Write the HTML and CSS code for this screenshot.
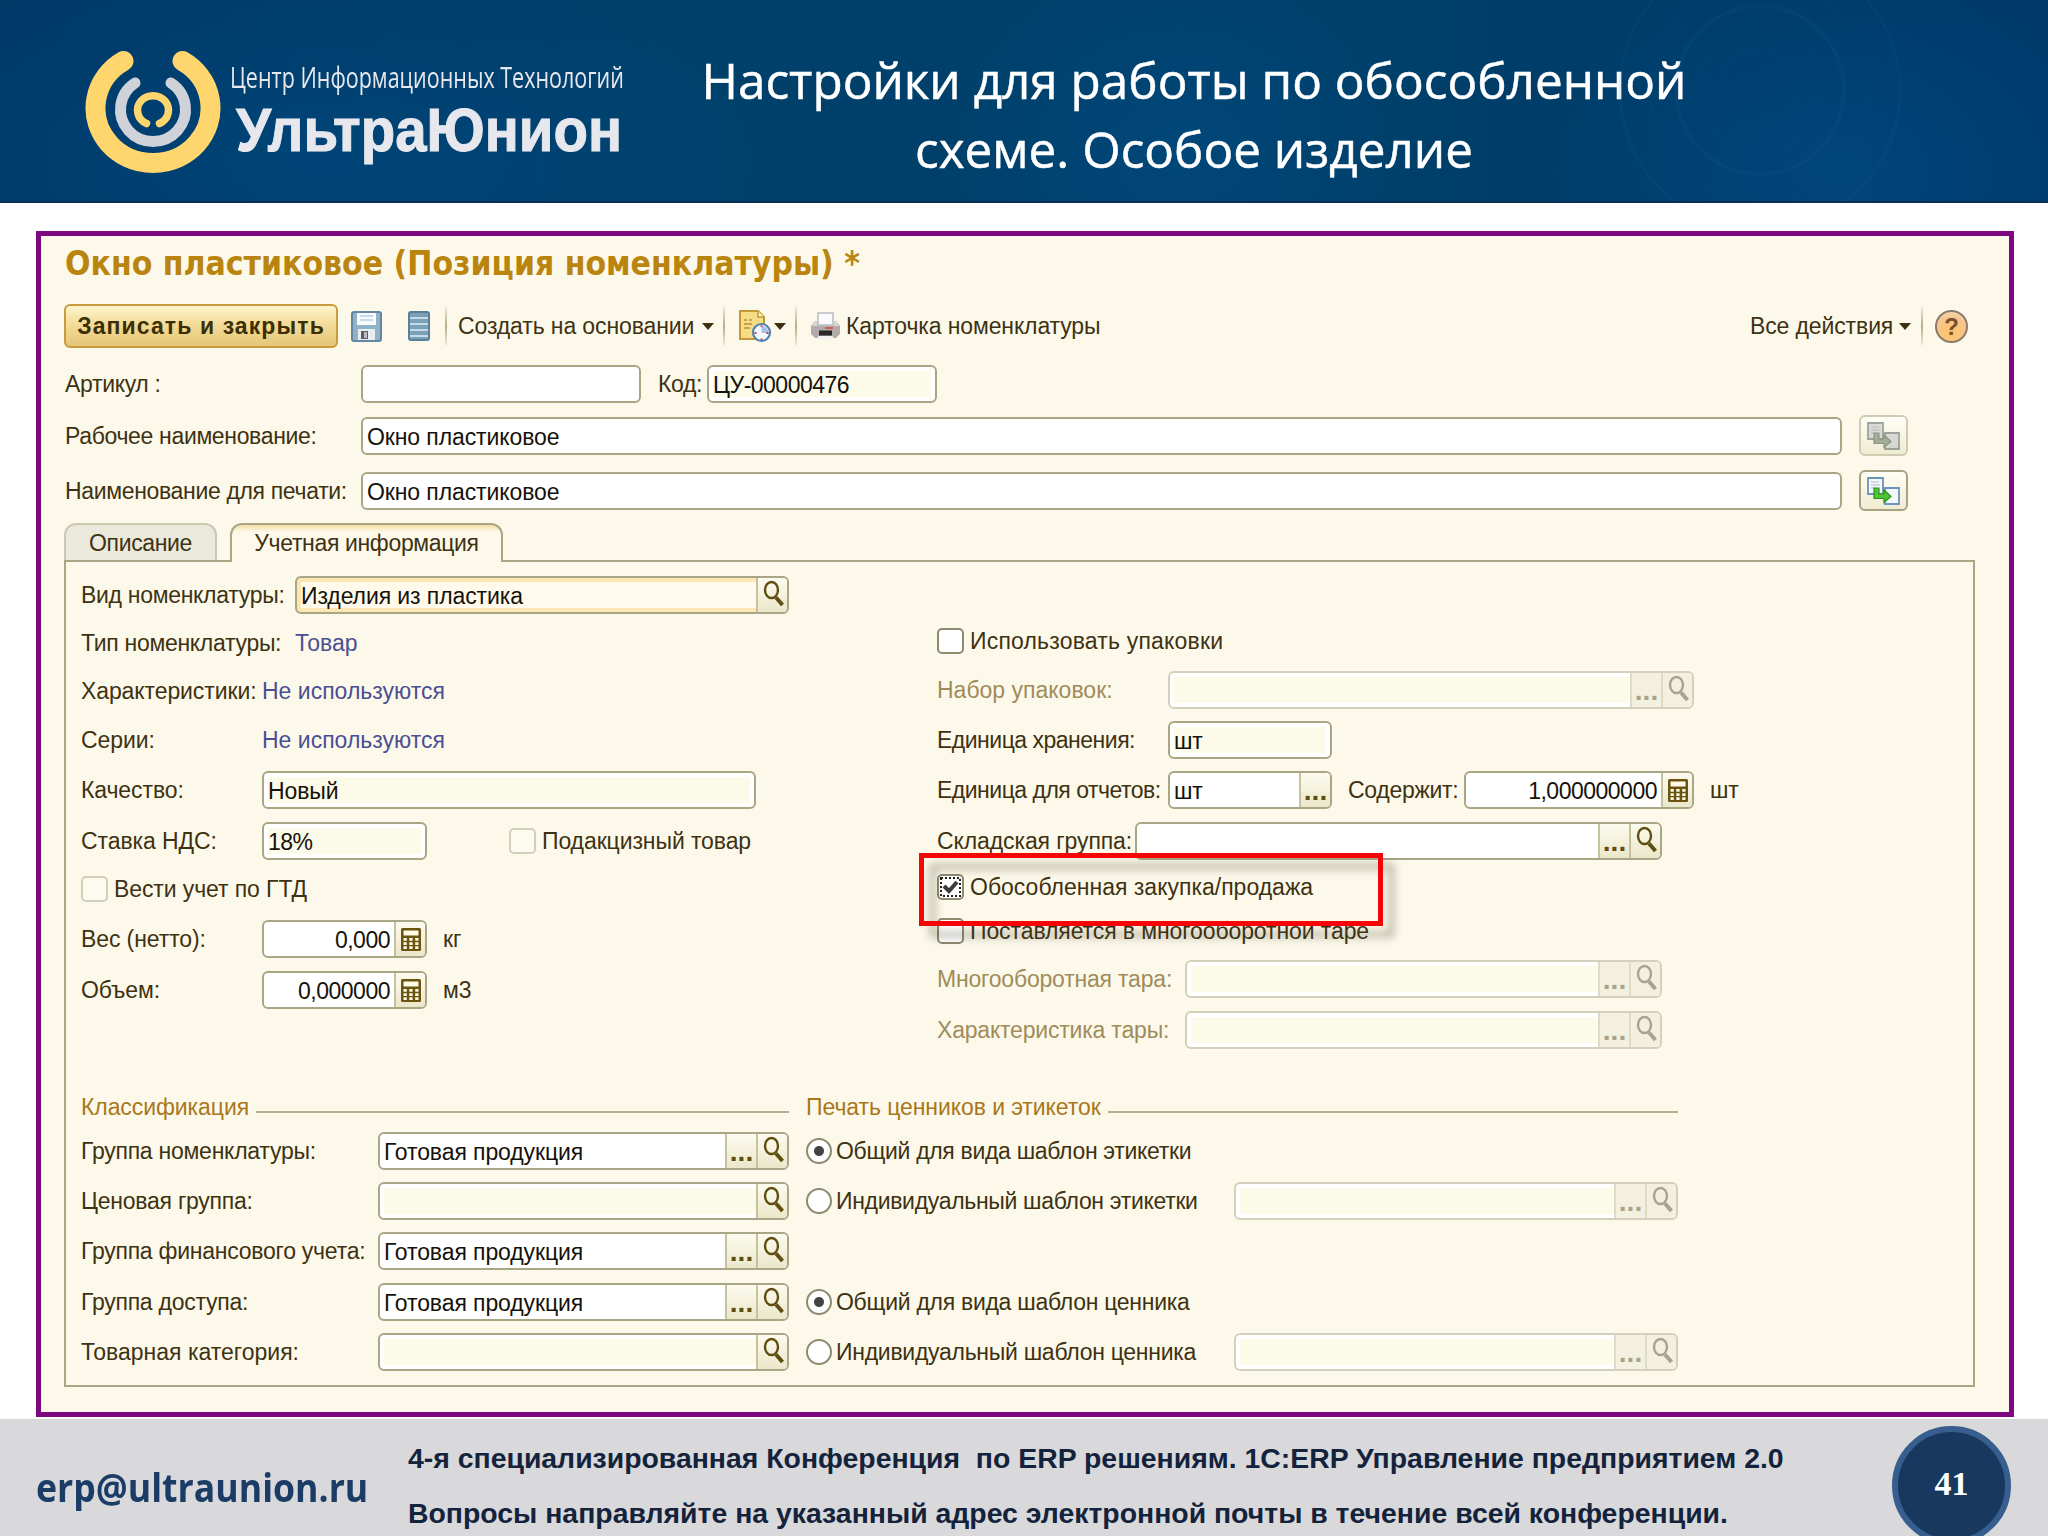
FILE: index.html
```html
<!DOCTYPE html>
<html lang="ru">

<head>
    <meta charset="UTF-8">
    <title>Настройки для работы по обособленной схеме</title>
    <link rel="stylesheet" href="styles.css">
</head>

<body>

    <svg class="sprite" width="0" height="0">
        <symbol id="i-search" viewBox="0 0 22 30">
            <ellipse cx="9.5" cy="10" rx="6.5" ry="8" fill="none" stroke="currentColor" stroke-width="2.4" />
            <path d="M14 17.500l6.500 7.500" stroke="currentColor" stroke-width="4" />
        </symbol>
        <symbol id="i-calc" viewBox="0 0 20 23">
            <rect width="20" height="23" rx="1.500" fill="#6b5410" />
            <path fill="#fffbe6" d="M2.500 2.500h15v5h-15zM2.500 10h3.300v2.700H2.500zM8.300 10h3.300v2.700H8.300zM14.200 10h3.300v2.700h-3.300zM2.500 14.200h3.300v2.700H2.500zM8.300 14.200h3.300v2.700H8.300zM14.200 14.200h3.300v2.700h-3.300zM2.500 18.300h3.300V21H2.500zM8.300 18.300h3.300V21H8.300zM14.200 18.300h3.300V21h-3.300z" />
        </symbol>
        <symbol id="i-copy" viewBox="0 0 33 28">
            <path class="doc" d="M1 1h15v16H1z" stroke-width="1.800" />
            <path class="lines" d="M4 5h8M4 8h9M4 11h5" stroke-width="1.200" />
            <path class="doc" d="M18 11h14v16H18z" stroke-width="1.800" />
            <path class="arrow" d="M7 11h5v6h5v-4l7 6.500-7 6v-4H7z" stroke-width="1.200" />
        </symbol>
    </svg>

    <header class="header">
        <svg class="logo" viewBox="0 0 140 126" width="140" height="126" fill="none" stroke-linecap="round">
            <path d="M39.500 13A57.500 54.900 0 1 0 98.500 13" stroke="#ffd56e" stroke-width="20" />
            <path d="M51 35A32.500 31.900 0 1 0 87 35" stroke="#cfd2d9" stroke-width="11" />
            <path d="M62.500 75.500A15.500 14.600 0 1 1 75.500 75.500" stroke="#ffd56e" stroke-width="7.500" />
        </svg>
        <div class="brand">
            <div class="brand-top"><span>Центр Информационных Технологий</span></div>
            <div class="brand-name"><span>УльтраЮнион</span></div>
        </div>
        <h1 class="slide-title"><span>Настройки для работы по обособленной<br>схеме. Особое изделие</span></h1>
        <svg class="rings" viewBox="0 0 360 201" width="360" height="201" fill="none" stroke="#2a6a9c">
            <circle cx="180" cy="90" r="40" /><circle cx="180" cy="90" r="62" /><circle cx="180" cy="90" r="84" stroke-width="4" />
            <circle cx="180" cy="90" r="110" /><circle cx="180" cy="90" r="140" stroke-width="3" />
        </svg>
    </header>

    <main class="window">
        <h2 class="win-title">Окно пластиковое (Позиция номенклатуры) *</h2>

        <div class="toolbar">
            <button class="save-btn">Записать и закрыть</button>
            <svg class="t-floppy" viewBox="0 0 31 31" width="31" height="31">
                <rect x="1" y="1" width="29" height="29" rx="2" fill="#8fb2c9" stroke="#6486a0" stroke-width="2" />
                <rect x="6" y="2" width="19" height="12" fill="#f6fafc" />
                <path d="M9 5h13M9 9h13" stroke="#b8cedb" stroke-width="1.500" />
                <rect x="7" y="18" width="17" height="11" fill="#e9edf0" />
                <rect x="10" y="20" width="7" height="8" fill="#5b5f66" />
                <rect x="13" y="21" width="3" height="6" fill="#b9bcc1" />
            </svg>
            <svg class="t-list" viewBox="0 0 22 30" width="22" height="30">
                <rect x="1" y="1" width="20" height="28" rx="2" fill="#7ba1ba" stroke="#5b7f97" stroke-width="2" />
                <path d="M2 7h18M2 13h18M2 19h18M2 25h18" stroke="#c6dbe7" stroke-width="2" />
            </svg>
            <i class="sep"></i>
            <span class="t-create">Создать на основании</span>
            <i class="caret"></i>
            <i class="sep sep-2"></i>
            <svg class="t-doc" viewBox="0 0 34 34" width="34" height="34">
                <path d="M2 2h18l6 6v22H2z" fill="#f5dc85" stroke="#c39a35" stroke-width="2" />
                <path d="M20 2v6h6" fill="#fff3c4" stroke="#c39a35" stroke-width="1.500" />
                <path d="M6 11h3M11 11h3M6 15h8M6 19h6" stroke="#c9a548" stroke-width="1.800" />
                <circle cx="23.500" cy="23.500" r="8.500" fill="#f3f8fd" stroke="#5182b4" stroke-width="2.200" />
                <path d="M23.500 24v-7a7 7 0 0 1 7 7z" fill="#a9bfea" />
                <path d="M23.500 18v-1.500M23.500 31V29.500M16.500 24h2M28.500 24h2" stroke="#d2404a" stroke-width="2" />
            </svg>
            <i class="caret caret-2"></i>
            <i class="sep sep-3"></i>
            <svg class="t-print" viewBox="0 0 29 28" width="29" height="28">
                <path d="M4 9h21l4 5v8l-4 4H4l-4-4v-8z" fill="#b3abab" />
                <path d="M4 9h21l3 5H1z" fill="#d9d6d6" />
                <path d="M7 1h15v12H7z" fill="#fbfbfd" stroke="#b9bbc4" stroke-width="1.500" />
                <path d="M14 16h8" stroke="#d65a55" stroke-width="2" />
                <rect x="8" y="18.500" width="13" height="5" fill="#2b2727" />
                <rect x="7" y="24" width="15" height="3.500" fill="#f3f1f1" />
            </svg>
            <span class="t-card">Карточка номенклатуры</span>
            <span class="t-all">Все действия</span>
            <i class="caret"></i>
            <i class="sep sep-4"></i>
            <span class="help">?</span>
        </div>

        <div class="head-row row-article">
            <label class="w-head">Артикул :</label>
            <div class="field w280"></div>
            <label class="lbl-code">Код:</label>
            <div class="field ro w230"><span class="val tight">ЦУ-00000476</span></div>
        </div>
        <div class="head-row row-work">
            <label class="w-head">Рабочее наименование:</label>
            <div class="field w1481"><span class="val">Окно пластиковое</span></div>
            <button class="copy-btn off"><svg width="33" height="28"><use href="#i-copy" /></svg></button>
        </div>
        <div class="head-row row-print">
            <label class="w-head">Наименование для печати:</label>
            <div class="field w1481"><span class="val">Окно пластиковое</span></div>
            <button class="copy-btn"><svg width="33" height="28"><use href="#i-copy" /></svg></button>
        </div>

        <div class="tabs">
            <div class="tab">Описание</div>
            <div class="tab active">Учетная информация</div>
        </div>

        <section class="panel">
            <div class="columns">
                <div class="left">
                    <div class="row">
                        <label class="w-kind">Вид номенклатуры:</label>
                        <div class="field focus w493"><span class="val">Изделия из пластика</span><b class="fb"><svg width="22" height="30"><use href="#i-search" /></svg></b></div>
                    </div>
                    <div class="row"><label class="w-kind">Тип номенклатуры:</label><a class="link">Товар</a></div>
                    <div class="row"><label class="w-left">Характеристики:</label><a class="link">Не используются</a></div>
                    <div class="row"><label class="w-left">Серии:</label><a class="link">Не используются</a></div>
                    <div class="row"><label class="w-left">Качество:</label><div class="field ro w494"><span class="val">Новый</span></div></div>
                    <div class="row">
                        <label class="w-left">Ставка НДС:</label>
                        <div class="field ro w165"><span class="val tight">18%</span></div>
                        <i class="check off excise"></i><label>Подакцизный товар</label>
                    </div>
                    <div class="row"><i class="check off"></i><label class="gtd">Вести учет по ГТД</label></div>
                    <div class="row">
                        <label class="w-left">Вес (нетто):</label>
                        <div class="field num w165"><span class="val tight">0,000</span><b class="fb"><svg width="20" height="23"><use href="#i-calc" /></svg></b></div>
                        <label class="unit">кг</label>
                    </div>
                    <div class="row">
                        <label class="w-left">Объем:</label>
                        <div class="field num w165"><span class="val tight">0,000000</span><b class="fb"><svg width="20" height="23"><use href="#i-calc" /></svg></b></div>
                        <label class="unit">м3</label>
                    </div>
                </div>

                <div class="right">
                    <div class="row"><i class="check"></i><label class="wide">Использовать упаковки</label></div>
                    <div class="row dim">
                        <label class="w-right loose">Набор упаковок:</label>
                        <div class="field ro w525"><span class="val"></span><b class="fb dots">...</b><b class="fb"><svg width="22" height="30"><use href="#i-search" /></svg></b></div>
                    </div>
                    <div class="row"><label class="w-right">Единица хранения:</label><div class="field ro w163"><span class="val">шт</span></div></div>
                    <div class="row">
                        <label class="w-right">Единица для отчетов:</label>
                        <div class="field w163"><span class="val">шт</span><b class="fb dots">...</b></div>
                        <label class="holds">Содержит:</label>
                        <div class="field num w229"><span class="val tight">1,000000000</span><b class="fb"><svg width="20" height="23"><use href="#i-calc" /></svg></b></div>
                        <label class="unit">шт</label>
                    </div>
                    <div class="row">
                        <label class="w-store">Складская группа:</label>
                        <div class="field w526"><span class="val"></span><b class="fb dots">...</b><b class="fb"><svg width="22" height="30"><use href="#i-search" /></svg></b></div>
                    </div>
                    <div class="row">
                        <i class="check on"><svg width="21" height="20" viewBox="0 0 21 20"><rect x="1" y="1" width="19" height="18" fill="none" stroke="#222" stroke-width="2" stroke-dasharray="2 2" /><path d="M4 9l5 5 8-9" fill="none" stroke="#3c3c3c" stroke-width="4" /></svg></i>
                        <label class="loose">Обособленная закупка/продажа</label>
                    </div>
                    <div class="row"><i class="check"></i><label>Поставляется в многооборотной таре</label></div>
                    <div class="row dim">
                        <label class="w-tare">Многооборотная тара:</label>
                        <div class="field ro w476"><span class="val"></span><b class="fb dots">...</b><b class="fb"><svg width="22" height="30"><use href="#i-search" /></svg></b></div>
                    </div>
                    <div class="row dim">
                        <label class="w-tare">Характеристика тары:</label>
                        <div class="field ro w476"><span class="val"></span><b class="fb dots">...</b><b class="fb"><svg width="22" height="30"><use href="#i-search" /></svg></b></div>
                    </div>
                    <!-- рамка вокруг флажка -->
                    <div class="highlight"></div>
                </div>
            </div>

            <div class="groups">
                <div class="group g-class">
                    <h3><span>Классификация</span></h3>
                    <div class="row"><label class="w-group">Группа номенклатуры:</label><div class="field w411"><span class="val">Готовая продукция</span><b class="fb dots">...</b><b class="fb"><svg width="22" height="30"><use href="#i-search" /></svg></b></div></div>
                    <div class="row"><label class="w-group">Ценовая группа:</label><div class="field ro w411"><span class="val"></span><b class="fb"><svg width="22" height="30"><use href="#i-search" /></svg></b></div></div>
                    <div class="row"><label class="w-group">Группа финансового учета:</label><div class="field w411"><span class="val">Готовая продукция</span><b class="fb dots">...</b><b class="fb"><svg width="22" height="30"><use href="#i-search" /></svg></b></div></div>
                    <div class="row"><label class="w-group">Группа доступа:</label><div class="field w411"><span class="val">Готовая продукция</span><b class="fb dots">...</b><b class="fb"><svg width="22" height="30"><use href="#i-search" /></svg></b></div></div>
                    <div class="row"><label class="w-group loose">Товарная категория:</label><div class="field ro w411"><span class="val"></span><b class="fb"><svg width="22" height="30"><use href="#i-search" /></svg></b></div></div>
                </div>
                <div class="group g-print">
                    <h3><span>Печать ценников и этикеток</span></h3>
                    <div class="row"><i class="radio on"></i><label>Общий для вида шаблон этикетки</label></div>
                    <div class="row"><i class="radio"></i><label class="w-tpl">Индивидуальный шаблон этикетки</label><div class="field ro dim w444"><span class="val"></span><b class="fb dots">...</b><b class="fb"><svg width="22" height="30"><use href="#i-search" /></svg></b></div></div>
                    <div class="row"></div>
                    <div class="row"><i class="radio on"></i><label class="snug">Общий для вида шаблон ценника</label></div>
                    <div class="row"><i class="radio"></i><label class="w-tpl snug">Индивидуальный шаблон ценника</label><div class="field ro dim w444"><span class="val"></span><b class="fb dots">...</b><b class="fb"><svg width="22" height="30"><use href="#i-search" /></svg></b></div></div>
                </div>
            </div>
        </section>
    </main>

    <footer class="footer">
        <div class="email"><span>erp@ultraunion.ru</span></div>
        <div class="notes">
            <p>4-я специализированная Конференция&nbsp; по ERP решениям. 1С:ERP Управление предприятием 2.0</p>
            <p>Вопросы направляйте на указанный адрес электронной почты в течение всей конференции.</p>
        </div>
        <div class="page-no">41</div>
    </footer>

</body>

</html>
```
FILE: styles.css
```css
* {
    box-sizing: border-box;
}

body {
    margin: 0;
    width: 2048px;
    height: 1536px;
    overflow: hidden;
    background: #fff;
    font-family: "Liberation Sans", Arial, sans-serif;
    font-size: 23px;
    color: #3d3212;
    display: flex;
    flex-direction: column;
}

h1, h2, h3, p {
    margin: 0;
    font-weight: normal;
}

.sprite {
    position: absolute;
}

svg {
    display: block;
    flex: none;
}

/* шапка */
.header {
    position: relative;
    display: flex;
    height: 203px;
    flex: none;
    background:
        radial-gradient(ellipse 260px 220px at 1180px 150px, rgba(0, 78, 136, .5), transparent),
        radial-gradient(ellipse 300px 200px at 1840px 170px, rgba(0, 80, 140, .5), transparent),
        radial-gradient(ellipse 500px 220px at 330px 160px, rgba(0, 72, 126, .7), transparent),
        linear-gradient(90deg, #003866, #00406a 35%, #003f69 70%, #00396a);
    border-bottom: 2px solid #0a2f55;
    overflow: hidden;
}

.logo {
    margin: 48px 0 0 84px;
}

.brand {
    width: 400px;
    margin-left: 6px;
    padding-top: 55px;
    color: #e6e8ee;
    white-space: nowrap;
}

.brand span,
.email span {
    display: inline-block;
    transform-origin: 0 50%;
}

.brand-top {
    font: 30px/44px "Open Sans", sans-serif;
}

.brand-top span {
    transform: scaleX(.717);
}

.brand-name {
    font: bold 62px/62px "Liberation Sans", sans-serif;
    padding-left: 6px;
    -webkit-text-stroke: 1px #e6e8ee;
}

.brand-name span {
    transform: scaleX(.91);
}

.slide-title {
    position: absolute;
    left: 594px;
    width: 1200px;
    top: 46px;
    color: #fff;
    text-align: center;
    font: 50px/69px "Open Sans", sans-serif;
    -webkit-text-stroke: .5px #fff;
}

.slide-title span {
    display: inline-block;
    transform: scaleX(.989);
}

.rings {
    position: absolute;
    left: 1580px;
    top: 0;
    opacity: .1;
}

/* окно */
.window {
    width: 1978px;
    height: 1186px;
    flex: none;
    margin: 28px 0 0 36px;
    padding-left: 24px;
    border: 5px solid #7d087f;
    background: #fdf9ea;
    white-space: nowrap;
}

.win-title {
    height: 68px;
    padding-top: 9px;
    font: bold 33.4px/38px "DejaVu Sans Condensed", "DejaVu Sans", sans-serif;
    color: #ba850f;
}

.toolbar {
    display: flex;
    align-items: center;
    height: 44px;
}

.toolbar span {
    letter-spacing: -.12px;
}

.save-btn {
    width: 274px;
    height: 44px;
    margin: 0 13px 0 -1px;
    padding: 0;
    border: 2px solid #c99a3e;
    border-radius: 6px;
    background: linear-gradient(#fff4cf, #f3dc98 45%, #e5c677);
    font: bold 23px "Liberation Sans", sans-serif;
    letter-spacing: 1.1px;
    color: #3d2f05;
}

.t-list {
    margin-left: 26px;
}

.sep {
    width: 2px;
    height: 38px;
    margin-left: 15px;
    background: linear-gradient(rgba(170, 164, 128, .2), #b3ad8a, rgba(170, 164, 128, .2));
}

.t-create {
    margin-left: 11px;
    width: 236px;
}

.caret {
    margin-left: 8px;
    border: 6px solid transparent;
    border-top: 7px solid #3d2f12;
    border-bottom: 0;
}

.sep-2 {
    margin-left: 9px;
}

.t-doc {
    margin-left: 13px;
}

.caret-2 {
    margin-left: 2px;
}

.sep-3 {
    margin-left: 9px;
}

.t-print {
    margin-left: 14px;
}

.t-card {
    margin-left: 6px;
    width: 256px;
}

.t-all {
    margin-left: 648px;
    width: 141px;
}

.sep-4 {
    margin-left: 10px;
}

.help {
    width: 33px;
    height: 33px;
    margin-left: 12px;
    border: 2px solid #8d7a68;
    border-radius: 50%;
    background: radial-gradient(circle at 50% 75%, #ffc465, #f6c68b 60%, #f3dcc4);
    font: bold 24px/29px "Liberation Sans", sans-serif;
    text-align: center;
    color: #7a5031;
}

.head-row {
    display: flex;
    align-items: center;
    height: 41px;
}

.head-row label {
    padding-top: 1px;
    letter-spacing: -.34px;
}

.row-article {
    margin-top: 15px;
}

.row-work {
    margin-top: 11px;
}

.row-print {
    margin-top: 14px;
}

.w-head {
    width: 296px;
}

.lbl-code {
    margin-left: 17px;
    width: 49px;
}

.copy-btn {
    display: flex;
    align-items: center;
    justify-content: center;
    width: 49px;
    height: 41px;
    margin-left: 17px;
    padding: 0;
    border: 2px solid #a7a382;
    border-radius: 6px;
    background: linear-gradient(#fffef6, #efecd2);
}

.doc {
    fill: #f4f8fd;
    stroke: #6b93bb;
}

.lines {
    stroke: #a9b9cf;
}

.arrow {
    fill: #4fc436;
    stroke: #2a9316;
}

.copy-btn.off {
    border-color: #cfccb4;
}

.copy-btn.off svg {
    filter: grayscale(.8) brightness(.82);
    opacity: .65;
}

/* поля */
.field {
    display: flex;
    flex: none;
    height: 38px;
    border: 2px solid #a9a685;
    border-radius: 6px;
    background: #fff;
    color: #15120a;
    overflow: hidden;
}

.field.ro {
    background: #fcfbea;
    box-shadow: inset 0 0 0 4px #fff;
}

.field.focus {
    background: #fffaec;
    box-shadow: inset 0 0 0 4px #fde6b4;
}

.val {
    flex: 1;
    padding: 0 4px;
    line-height: 36px;
    letter-spacing: -.1px;
}

.num .val {
    text-align: right;
}

.val.tight {
    letter-spacing: -.5px;
}

.fb {
    display: flex;
    align-items: center;
    justify-content: center;
    width: 31px;
    border-left: 2px solid #c6c2a0;
    background: linear-gradient(#fdfbef, #ebe7ca);
    color: #5f4e10;
}

.dots {
    font-size: 28px;
    line-height: 38px;
    padding-top: 2px;
}

.dim label {
    color: #a08c5a;
}

.dim .field,
.field.dim {
    border-color: #d3d0bb;
}

.dim .fb {
    border-color: #dedbc6;
    background: #f3f0df;
    color: #a9a38c;
}

.w163 { width: 164px; }
.w165 { width: 165px; }
.w229 { width: 230px; }
.w230 { width: 230px; }
.w280 { width: 280px; }
.w411 { width: 411px; }
.w444 { width: 444px; }
.w476 { width: 477px; }
.w493 { width: 494px; }
.w494 { width: 494px; }
.w525 { width: 526px; }
.w526 { width: 527px; }
.w1481 { width: 1481px; }

/* закладки */
.tabs {
    display: flex;
    align-items: flex-end;
    height: 38px;
    margin: 11px 0 0 -1px;
}

.tab {
    width: 153px;
    height: 37px;
    border: 2px solid #cbc8b2;
    border-bottom: 0;
    border-radius: 12px 12px 0 0;
    background: #ebe9dc;
    text-align: center;
    line-height: 36px;
    letter-spacing: -.35px;
}

.tab.active {
    position: relative;
    width: 273px;
    height: 39px;
    margin: 0 0 -2px 13px;
    border-color: #a9a685;
    background: linear-gradient(#f6dda2, #fdf9ea 7px);
}

.panel {
    width: 1911px;
    height: 827px;
    margin-left: -1px;
    border: 2px solid #a9a685;
    padding: 14px 0 0 15px;
}

.columns {
    display: flex;
    height: 511px;
}

.left {
    display: grid;
    grid-template-rows: 48px 48px 49px 50px 51px 48px 50px 51px 38px;
    align-content: start;
    width: 856px;
}

.right {
    position: relative;
    display: grid;
    grid-template-rows: 49px 50px 50px 51px 46px 44px 48px 51px 38px;
    align-content: start;
    padding-top: 46px;
}

.row {
    display: flex;
    align-items: center;
    height: 38px;
}

.row label,
.link {
    padding-top: 1px;
}

.row label {
    letter-spacing: -.1px;
}

.row .w-kind { width: 214px; letter-spacing: -.3px; }
.w-left { width: 181px; }
.row .w-right { width: 231px; letter-spacing: -.5px; }
.w-store { width: 198px; }
.row .w-tare { width: 248px; letter-spacing: -.2px; }
.row .w-group { width: 297px; letter-spacing: -.25px; }
.w-tpl { width: 398px; }
.row .wide { letter-spacing: .18px; }
.row .loose { letter-spacing: 0; }

.link {
    color: #4a4f94;
}

.check {
    flex: none;
    width: 27px;
    height: 26px;
    margin-right: 6px;
    border: 2px solid #8d8a70;
    border-radius: 5px;
    background: #fff;
}

.check.off {
    border-color: #d2cfb9;
    background: #fdfbf0;
}

.check.on svg {
    margin: 1px;
}

.excise {
    margin-left: 82px;
}

.unit {
    margin-left: 16px;
}

.row .holds {
    margin-left: 16px;
    width: 116px;
    letter-spacing: -.3px;
}

.highlight {
    position: absolute;
    left: -18px;
    top: 277px;
    width: 464px;
    height: 73px;
    border: 5px solid #f50505;
    filter: drop-shadow(11px 11px 4px rgba(60, 60, 40, .4));
}

.groups {
    display: flex;
    gap: 17px;
}

.group {
    display: grid;
    grid-template-rows: 45px 50px 50px 51px 50px 38px;
}

.g-class {
    width: 708px;
}

.g-print {
    width: 872px;
}

.group h3 {
    display: flex;
    align-items: center;
    gap: 7px;
    height: 39px;
    padding-top: 1px;
    font-size: 23px;
    letter-spacing: -.08px;
    color: #a9771c;
}

.group h3::after {
    content: "";
    flex: 1;
    height: 2px;
    margin-top: 10px;
    background: #b5b193;
}

.g-print label {
    letter-spacing: -.32px;
}

.row .snug {
    letter-spacing: -.28px;
}

.radio {
    flex: none;
    width: 26px;
    height: 26px;
    margin-right: 4px;
    border: 2px solid #8d8a70;
    border-radius: 50%;
    background: #fff;
}

.radio.on {
    background: radial-gradient(circle, #444 0 4.5px, #fff 5.5px);
}

/* подвал */
.footer {
    display: flex;
    height: 117px;
    margin-top: 2px;
    flex: none;
    background: #d9d8da;
    white-space: nowrap;
}

.email {
    width: 372px;
    padding: 38px 0 0 36px;
    font: bold 39px/60px "Open Sans", sans-serif;
    color: #1b3c66;
}

.email span {
    transform: scaleX(.914);
}

.notes {
    width: 1484px;
    padding: 23px 0 0 36px;
    font-size: 28.4px;
    color: #14233c;
}

.notes p {
    height: 55px;
    line-height: 32px;
    font-weight: bold;
}

.page-no {
    width: 119px;
    height: 119px;
    margin: 7px 0 0 36px;
    border: 6px solid #375e8e;
    border-radius: 50%;
    background: #18385f;
    color: #fff;
    font: bold 34px/103px "Liberation Serif", serif;
    text-align: center;
}
```
